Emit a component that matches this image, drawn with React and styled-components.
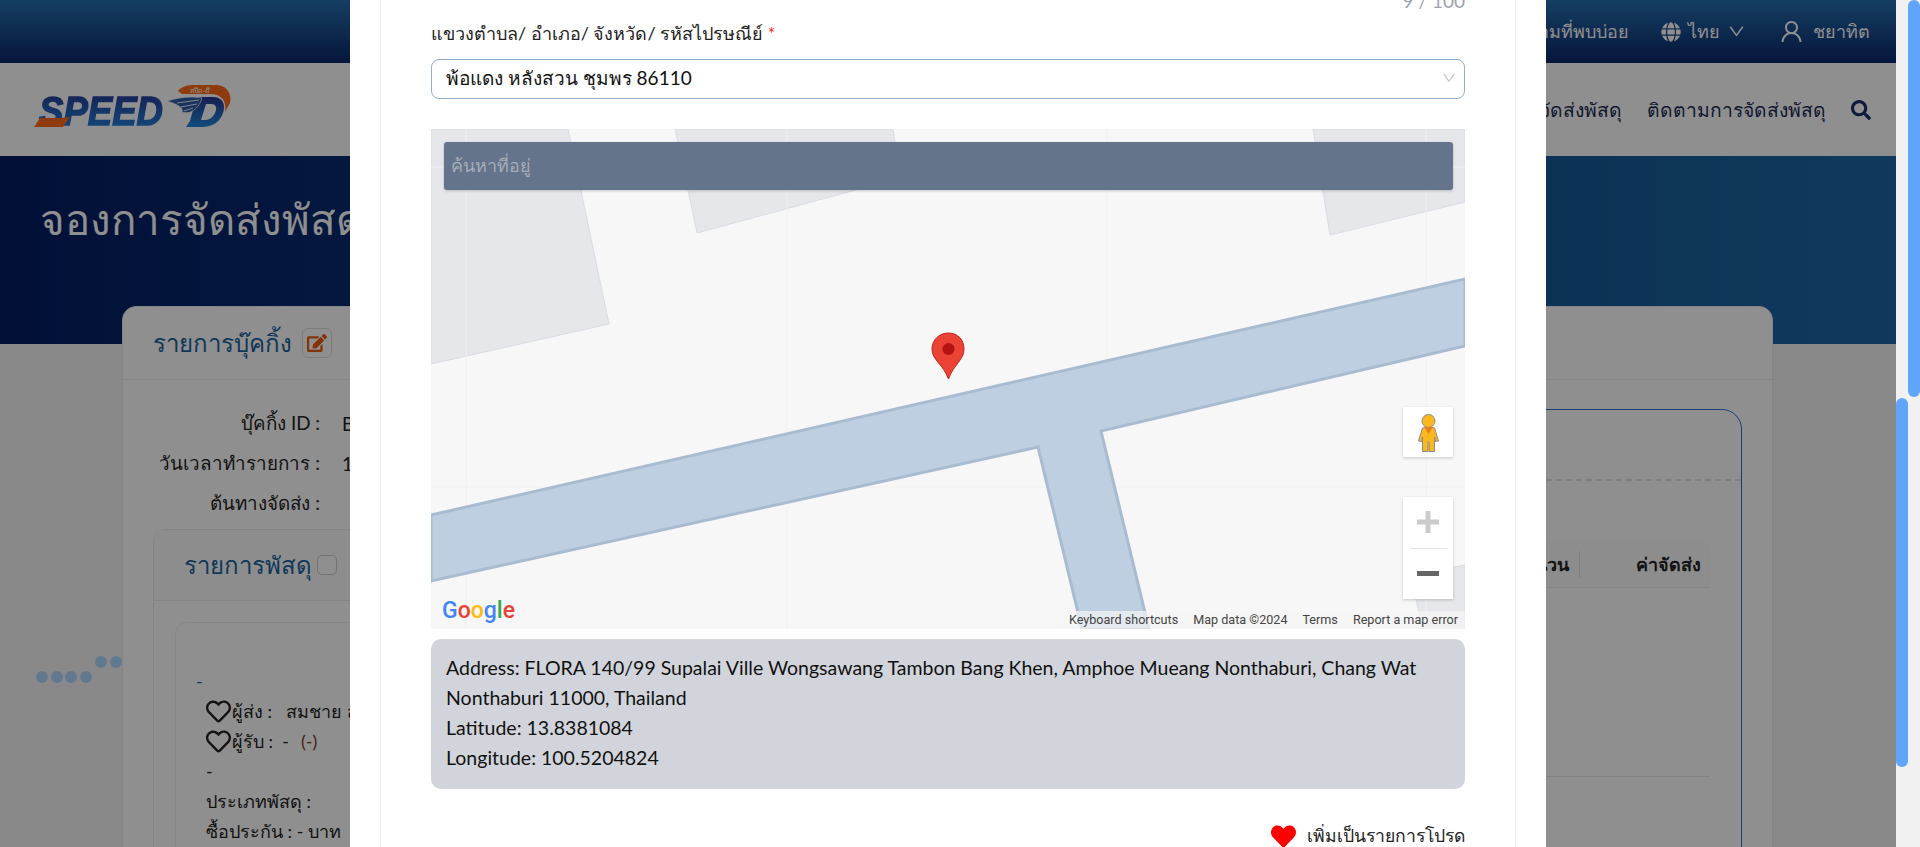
import React from 'react';
import styled, { createGlobalStyle } from 'styled-components';
import { FaGlobe, FaSearch, FaEdit, FaHeart, FaRegHeart } from 'react-icons/fa';
import { AiOutlineDown, AiOutlineUser } from 'react-icons/ai';

const GlobalStyle = createGlobalStyle`
  html, body { margin: 0; padding: 0; height: 100%; overflow: hidden; }
  body { font-family: "Lato", "Noto Sans", sans-serif; color: #111; }
  * { box-sizing: border-box; }
`;

const Shell = styled.div`
  display: flex;
  width: 1920px;
  height: 847px;
  overflow: hidden;
`;

const Viewport = styled.div`
  position: relative;
  flex: 1;
  min-width: 0;
  background: #f5f5f5;
  overflow: hidden;
`;

const Track = styled.div`
  width: 12px;
  background: #f1f1f1;
`;

const Thumb = styled.div`
  width: 12px;
  height: ${(p) => p.$h}px;
  margin-top: ${(p) => p.$top}px;
  border-radius: 6px;
  background: #60a5fa;
`;

/* background page */
const TopBar = styled.div`
  display: flex;
  justify-content: flex-end;
  align-items: center;
  gap: 32px;
  height: 63px;
  padding-right: 26px;
  background: linear-gradient(180deg, #2770b1 0%, #0b2669 100%);
  color: #fff;
  font-size: 18px;
`;

const TopItem = styled.div`
  display: flex;
  align-items: center;
  gap: ${(p) => p.$gap || 7}px;
`;

const NavBar = styled.div`
  display: flex;
  align-items: center;
  justify-content: space-between;
  height: 93px;
  padding: 0 25px 0 30px;
  background: #fff;
`;

const LogoMark = styled.svg`
  margin-bottom: 6px;
  overflow: visible;
  filter: drop-shadow(0 1px 0 #fff) drop-shadow(-1px 0 0 #fff);
`;

const NavLinks = styled.div`
  display: flex;
  align-items: center;
  gap: 25px;
  color: #1c2c52;
  font-size: 19.3px;
`;

const SearchButton = styled(FaSearch)`
  color: #1a3070;
  font-size: 20px;
`;

const Hero = styled.div`
  height: 188px;
  padding: 36px 40px 0;
  background: linear-gradient(90deg, #041d64 0%, #1b68a6 100%);
`;

const HeroTitle = styled.h1`
  margin: 0;
  color: #fff;
  font-size: 42px;
  font-weight: 500;
  line-height: 54px;
  white-space: nowrap;
`;

const MainCard = styled.div`
  width: 1651px;
  margin: -38px 0 0 122px;
  height: 600px;
  border: 1px solid #ececec;
  border-radius: 14px 14px 0 0;
  background: #fff;
`;

const CardHead = styled.div`
  display: flex;
  align-items: center;
  gap: 10px;
  height: 73px;
  padding-left: 30px;
  border-bottom: 1px solid #eee;
`;

const CardTitle = styled.div`
  color: #1a64a0;
  font-size: 24px;
  line-height: 30px;
`;

const EditBox = styled.span`
  display: flex;
  align-items: center;
  justify-content: center;
  width: 30px;
  height: 30px;
  border: 1px solid #ddd;
  border-radius: 6px;
  color: #ea5a12;
  font-size: 20px;
`;

const CardBody = styled.div`
  display: flex;
  justify-content: space-between;
  padding: 23px 30px 0;
`;

const LeftCol = styled.div`
  width: 1000px;
`;

const InfoRow = styled.div`
  display: flex;
  gap: 22px;
  height: 40px;
  align-items: center;
  font-size: 18.8px;
  color: #222;
`;

const InfoLabel = styled.div`
  width: 167px;
  text-align: right;
  white-space: nowrap;
`;

const InnerCard = styled.div`
  margin-top: 6px;
  border: 1px solid #eee;
  border-radius: 12px;
  background: #fff;
`;

const InnerHead = styled.div`
  display: flex;
  align-items: center;
  gap: 5px;
  height: 71px;
  padding-left: 30px;
  border-bottom: 1px solid #eee;
  background: #fcfcfc;
`;

const CheckBox = styled.span`
  width: 20px;
  height: 20px;
  border: 1px solid #ccc;
  border-radius: 5px;
  background: #fff;
`;

const ParcelCard = styled.div`
  margin: 21px 0 0 21px;
  padding: 43px 20px 0 20px;
  border: 1px solid #eee;
  border-radius: 12px;
  height: 300px;
  font-size: 18px;
  color: #222;
`;

const ParcelCode = styled.div`
  color: #1a64a0;
  line-height: 30px;
  height: 30px;
`;

const ParcelLine = styled.div`
  display: flex;
  align-items: center;
  gap: 1px;
  height: 30px;
  padding-left: 10px;
  white-space: nowrap;
`;

const HollowHeart = styled(FaRegHeart)`
  font-size: 25px;
  color: #222;
`;

const Muted = styled.span`
  margin-left: 11px;
  color: #7a3a1c;
`;

const RightPanel = styled.div`
  width: 700px;
  height: 520px;
  margin-top: 6px;
  border: 1px solid #2f6fc4;
  border-radius: 20px 20px 0 0;
`;

const PanelHead = styled.div`
  height: 71px;
  border-bottom: 2px dashed #e3e3e3;
`;

const TableHead = styled.div`
  display: flex;
  align-items: center;
  justify-content: flex-end;
  height: 47px;
  margin: 60px 31px 0 0;
  background: #fcfcfc;
  border-bottom: 1px solid #eee;
  border-radius: 8px 8px 0 0;
  font-size: 18px;
  font-weight: 700;
  color: #222;
`;

const HeadCell = styled.div`
  padding: 0 ${(p) => p.$right}px 0 ${(p) => p.$left}px;
  border-right: ${(p) => (p.$divider ? '1px solid #e4e4e4' : 'none')};
  line-height: 27px;
`;

const TableRule = styled.div`
  height: 1px;
  margin: 188px 31px 0 0;
  background: #e6e6e6;
`;

const LoadingDots = styled.div`
  position: absolute;
  left: 36px;
  top: 656px;
  width: 90px;
  height: 28px;
`;

const Dot = styled.span`
  position: absolute;
  left: ${(p) => p.$x}px;
  top: ${(p) => p.$y}px;
  width: 12px;
  height: 12px;
  border-radius: 50%;
  background: #add8ff;
`;

/* modal */
const Overlay = styled.div`
  position: absolute;
  inset: 0;
  display: flex;
  justify-content: center;
  background: rgba(0, 0, 0, 0.44);
`;

const Modal = styled.div`
  width: 1196px;
  height: 847px;
  padding: 0 30px;
  background: #fff;
  overflow: hidden;
`;

const ModalCard = styled.div`
  height: 900px;
  margin-top: -9px;
  padding: 0 50px;
  border: 1px solid #f0f0f0;
  border-width: 0 1px;
`;

const Counter = styled.div`
  height: 20px;
  line-height: 20px;
  text-align: right;
  color: #9ca3af;
  font-size: 19px;
`;

const FieldLabel = styled.label`
  display: block;
  margin-top: 10px;
  height: 24px;
  line-height: 24px;
  font-size: 18px;
  color: #222;
`;

const Required = styled.span`
  color: #ef2b1c;
`;

const SelectBox = styled.div`
  display: flex;
  align-items: center;
  justify-content: space-between;
  height: 40px;
  margin-top: 14px;
  padding: 0 7px 3px 14px;
  border: 1px solid #8fb0cc;
  border-radius: 8px;
  font-size: 19px;
  color: #111;
`;

const SelectArrow = styled(AiOutlineDown)`
  color: #c4c9d0;
  font-size: 16px;
`;

const MapFrame = styled.div`
  position: relative;
  height: 500px;
  margin-top: 30px;
  background: #f7f7f7;
  overflow: hidden;
`;

const MapDrawing = styled.svg`
  display: block;
`;

const MapSearch = styled.div`
  position: absolute;
  left: 13px;
  right: 12px;
  top: 13px;
  height: 48px;
  padding-left: 7px;
  border-radius: 3px;
  background: #64748b;
  box-shadow: 0 1px 3px rgba(0, 0, 0, 0.2);
  color: #a5adb8;
  font-size: 18px;
  line-height: 46px;
`;

const ControlBox = styled.div`
  position: absolute;
  left: 972px;
  top: ${(p) => p.$top}px;
  width: 50px;
  height: ${(p) => p.$h}px;
  background: #fff;
  box-shadow: 0 1px 3px rgba(0, 0, 0, 0.2);
`;

const ZoomBox = styled(ControlBox)`
  display: flex;
  flex-direction: column;
  align-items: center;
`;

const ZoomCell = styled.div`
  display: flex;
  align-items: center;
  justify-content: center;
  height: 51px;
`;

const ZoomDivider = styled.div`
  width: 37px;
  height: 1px;
  background: #e4e4e4;
`;

const GoogleMark = styled.div`
  position: absolute;
  left: 11px;
  bottom: 3px;
  font-family: "Roboto", sans-serif;
  font-size: 23px;
  font-weight: 500;
  line-height: 30px;
`;

const GoogleLetter = styled.span`
  color: ${(p) => p.$c};
`;

const MapFooter = styled.div`
  position: absolute;
  right: 0;
  bottom: 0;
  display: flex;
  gap: 15px;
  height: 18px;
  padding: 0 7px 0 6px;
  background: rgba(245, 245, 245, 0.7);
  font-family: "Roboto", sans-serif;
  font-size: 12.6px;
  line-height: 18px;
  color: #444;
  white-space: nowrap;
`;

const AddressBox = styled.div`
  height: 150px;
  margin-top: 10px;
  padding: 14px 15px;
  border-radius: 10px;
  background: #d1d5db;
  font-size: 19.5px;
  line-height: 30px;
  color: #111;
`;

const FavRow = styled.div`
  display: flex;
  justify-content: flex-end;
  align-items: center;
  gap: 11px;
  margin-top: 31px;
  height: 32px;
  font-size: 17.6px;
  color: #222;
`;

const RedHeart = styled(FaHeart)`
  color: #ff0000;
  font-size: 25px;
`;

const buildings = [
  '137,0 178,195 0,235 0,0',
  '244,0 266,104 469,49 462,0',
  '882,0 899,106 1034,73 1034,0',
  '1034,436 979,446 992,500 1034,500',
];

const tileLinesX = [35, 356, 676, 995];
const tileLinesY = [38, 358];

const googleLetters = [
  ['G', '#4285f4'],
  ['o', '#ea4335'],
  ['o', '#fbbc05'],
  ['g', '#4285f4'],
  ['l', '#34a853'],
  ['e', '#ea4335'],
];

const dots = [
  [0, 15], [15, 15], [29, 15], [44, 15], [59, 0], [74, 0],
];

function SpeedLogo() {
  return (
    <LogoMark width="202" height="44" viewBox="0 0 202 44">
      <defs>
        <linearGradient id="speedFill" x1="0" y1="0" x2="0" y2="1">
          <stop offset="0" stopColor="#2a3490" />
          <stop offset="1" stopColor="#1f8ae0" />
        </linearGradient>
      </defs>
      <text x="9" y="40" fontFamily="Liberation Sans" fontStyle="italic" fontWeight="700" fontSize="40" textLength="124" lengthAdjust="spacingAndGlyphs" fill="url(#speedFill)" stroke="url(#speedFill)" strokeWidth="1.4">SPEED</text>
      <path d="M4 42 L10 33 H31 L40 32 L33 42 Z" fill="#ff6a1a" />
      <path d="M148 6 C152 1 158 0 165 0 H186 C197 0 202 9 200 18 L195 27 C197 14 190 9 180 9 H152 Z" fill="#ff6a1a" />
      <path fillRule="evenodd" d="M170 12 H183 C193 12 196 20 193 28 C190 37 182 42 172 42 H156 L160 36 L166 14 Z M176 19 L171 35 H175 C181 35 185 30 186 25 C187 20 184 19 180 19 Z" fill="url(#speedFill)" />
      <path d="M137 16 C150 12 162 11 172 13 C169 24 160 30 152 27 C154 23 147 19 137 16 Z" fill="#2c5ba8" stroke="#fff" strokeWidth="0.7" />
      <path d="M147 18 L169 15 M151 22 L167 19 M154 26 L163 23" stroke="#fff" strokeWidth="0.9" />
      <text x="160" y="7.500" fontFamily="Noto Sans" fontSize="7" fill="#fff">สปีด-ดี</text>
    </LogoMark>
  );
}

function Pegman() {
  return (
    <svg width="21" height="38" viewBox="0 0 21 38">
      <path d="M4.500 14 Q10.500 11 16.500 14 L20.500 27 L17.500 27.500 L16.500 23 V37.500 H11 V28 H10 V37.500 H4.500 V23 L3.500 27.500 L0.500 27 Z" fill="#fbb81c" stroke="#8a8a8a" />
      <circle cx="10.500" cy="7" r="6.500" fill="#fbb81c" stroke="#8a8a8a" />
      <path d="M6.500 13 H15 L10.500 20 Z" fill="#e8801a" />
    </svg>
  );
}

function MapPin() {
  return (
    <g transform="translate(501 204)">
      <path d="M16.500 0 C7 0 0 7 0 16 C0 27 11 31 16.500 46 C22 31 32 27 32 16 C32 7 26 0 16.500 0 Z" fill="#ea4335" stroke="#c5221f" />
      <circle cx="16.500" cy="16" r="6" fill="#b31412" />
    </g>
  );
}

function MapCanvas() {
  return (
    <MapDrawing width="1034" height="500" viewBox="0 0 1034 500">
      {buildings.map((points) => (
        <polygon key={points} points={points} fill="#e6e7eb" stroke="#d9dbe6" />
      ))}
      {tileLinesX.map((x) => (
        <line key={x} x1={x} y1="0" x2={x} y2="500" stroke="#f1f1f1" />
      ))}
      {tileLinesY.map((y) => (
        <line key={y} x1="0" y1={y} x2="1034" y2={y} stroke="#f1f1f1" />
      ))}
      <path d="M0 386 L1034 150 V217 L670 302 L718 500 H651 L607 318 L0 452 Z" fill="#bdcfe0" stroke="#a9bbd1" strokeWidth="3" />
      <MapPin />
    </MapDrawing>
  );
}

function BackgroundPage() {
  return (
    <>
      <TopBar>
        <span>คำถามที่พบบ่อย</span>
        <TopItem>
          <FaGlobe size={20} />
          <span>ไทย</span>
          <AiOutlineDown size={19} />
        </TopItem>
        <TopItem $gap={8}>
          <AiOutlineUser size={27} />
          <span>ชยาทิต</span>
        </TopItem>
      </TopBar>
      <NavBar>
        <SpeedLogo />
        <NavLinks>
          <span>จองการจัดส่งพัสดุ</span>
          <span>ติดตามการจัดส่งพัสดุ</span>
          <SearchButton />
        </NavLinks>
      </NavBar>
      <Hero>
        <HeroTitle>จองการจัดส่งพัสดุ</HeroTitle>
      </Hero>
      <MainCard>
        <CardHead>
          <CardTitle>รายการบุ๊คกิ้ง</CardTitle>
          <EditBox><FaEdit /></EditBox>
        </CardHead>
        <CardBody>
          <LeftCol>
            <InfoRow><InfoLabel>บุ๊คกิ้ง ID :</InfoLabel><span>BK</span></InfoRow>
            <InfoRow><InfoLabel>วันเวลาทำรายการ :</InfoLabel><span>12</span></InfoRow>
            <InfoRow><InfoLabel>ต้นทางจัดส่ง :</InfoLabel></InfoRow>
            <InnerCard>
              <InnerHead>
                <CardTitle>รายการพัสดุ</CardTitle>
                <CheckBox />
              </InnerHead>
              <ParcelCard>
                <ParcelCode>-</ParcelCode>
                <ParcelLine><HollowHeart />ผู้ส่ง :&nbsp;&nbsp;&nbsp;สมชาย สมใจ</ParcelLine>
                <ParcelLine><HollowHeart />ผู้รับ :&nbsp;&nbsp;-<Muted>(-)</Muted></ParcelLine>
                <ParcelLine>-</ParcelLine>
                <ParcelLine>ประเภทพัสดุ :</ParcelLine>
                <ParcelLine>ซื้อประกัน : - บาท</ParcelLine>
              </ParcelCard>
            </InnerCard>
          </LeftCol>
          <RightPanel>
            <PanelHead />
            <TableHead>
              <HeadCell $divider $left={10} $right={10}>จำนวน</HeadCell>
              <HeadCell $left={56} $right={9}>ค่าจัดส่ง</HeadCell>
            </TableHead>
            <TableRule />
          </RightPanel>
        </CardBody>
      </MainCard>
      <LoadingDots>
        {dots.map(([x, y]) => (
          <Dot key={x} $x={x} $y={y} />
        ))}
      </LoadingDots>
    </>
  );
}

function AddressModal() {
  return (
    <Overlay>
      <Modal>
        <ModalCard>
          <Counter>9 / 100</Counter>
          <FieldLabel>แขวงตำบล/ อำเภอ/ จังหวัด/ รหัสไปรษณีย์ <Required>*</Required></FieldLabel>
          <SelectBox>
            <span>พ้อแดง หลังสวน ชุมพร 86110</span>
            <SelectArrow />
          </SelectBox>
          <MapFrame>
            <MapCanvas />
            <MapSearch>ค้นหาที่อยู่</MapSearch>
            <ControlBox $top={278} $h={50}>
              <ZoomCell><Pegman /></ZoomCell>
            </ControlBox>
            <ZoomBox $top={368} $h={102}>
              <ZoomCell>
                <svg width="22" height="22" viewBox="0 0 22 22"><path d="M0 8.500 H8.500 V0 H13.500 V8.500 H22 V13.500 H13.500 V22 H8.500 V13.500 H0 Z" fill="#ccc" /></svg>
              </ZoomCell>
              <ZoomDivider />
              <ZoomCell>
                <svg width="22" height="5" viewBox="0 0 22 5"><rect width="22" height="5" fill="#666" /></svg>
              </ZoomCell>
            </ZoomBox>
            <GoogleMark>
              {googleLetters.map(([letter, color], i) => (
                <GoogleLetter key={i} $c={color}>{letter}</GoogleLetter>
              ))}
            </GoogleMark>
            <MapFooter>
              <span>Keyboard shortcuts</span>
              <span>Map data ©2024</span>
              <span>Terms</span>
              <span>Report a map error</span>
            </MapFooter>
          </MapFrame>
          <AddressBox>
            <div>Address: FLORA 140/99 Supalai Ville Wongsawang Tambon Bang Khen, Amphoe Mueang Nonthaburi, Chang Wat Nonthaburi 11000, Thailand</div>
            <div>Latitude: 13.8381084</div>
            <div>Longitude: 100.5204824</div>
          </AddressBox>
          <FavRow>
            <RedHeart />
            <span>เพิ่มเป็นรายการโปรด</span>
          </FavRow>
        </ModalCard>
      </Modal>
    </Overlay>
  );
}

export default function App() {
  return (
    <>
      <GlobalStyle />
      <Shell>
        <Viewport>
          <BackgroundPage />
          <AddressModal />
        </Viewport>
        <Track><Thumb $top={398} $h={369} /></Track>
        <Track><Thumb $top={0} $h={397} /></Track>
      </Shell>
    </>
  );
}
